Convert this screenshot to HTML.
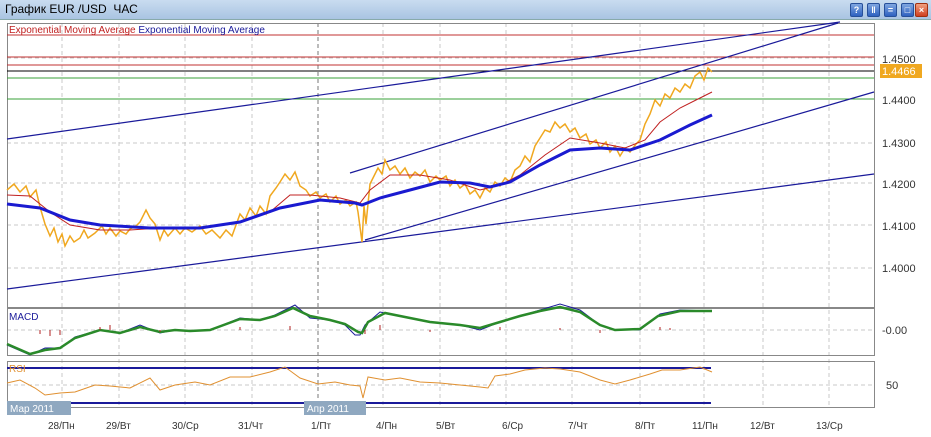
<!DOCTYPE html>
<html><head><meta charset="utf-8"><style>
body{margin:0;width:931px;height:437px;overflow:hidden;background:#fff;font-family:"Liberation Sans",sans-serif}
.tb{position:absolute;left:0;top:0;width:931px;height:19px;background:linear-gradient(#c9dcf0,#a9c4e2);border-bottom:1px solid #8aa;}
.tb span{position:absolute;left:5px;top:2px;font-size:12px;color:#000}
.btn{position:absolute;top:3px;width:11px;height:12px;border-radius:2px;background:linear-gradient(#7fa6e0,#2f62c0);border:1px solid #27509a;color:#fff;font-size:9px;font-weight:bold;text-align:center;line-height:12px}
svg{position:absolute;left:0;top:0}
</style></head><body>
<div class="tb"><span>График EUR /USD &nbsp;ЧАС</span>
<div class="btn" style="left:850px">?</div><div class="btn" style="left:867px">‖</div><div class="btn" style="left:884px">=</div><div class="btn" style="left:901px">□</div><div class="btn" style="left:915px;background:linear-gradient(#f0a080,#d04020);border-color:#a03010">×</div>
</div>
<svg width="931" height="437" font-family="Liberation Sans, sans-serif">
<g stroke="#c8c8c8" stroke-dasharray="4,3" stroke-width="1">
<line x1="62" y1="23" x2="62" y2="407"/><line x1="119" y1="23" x2="119" y2="407"/><line x1="185" y1="23" x2="185" y2="407"/><line x1="252" y1="23" x2="252" y2="407"/><line x1="383" y1="23" x2="383" y2="407"/><line x1="440" y1="23" x2="440" y2="407"/><line x1="506" y1="23" x2="506" y2="407"/><line x1="572" y1="23" x2="572" y2="407"/><line x1="640" y1="23" x2="640" y2="407"/><line x1="704" y1="23" x2="704" y2="407"/><line x1="763" y1="23" x2="763" y2="407"/><line x1="829" y1="23" x2="829" y2="407"/>
<line x1="7" y1="99" x2="874" y2="99"/><line x1="7" y1="143" x2="874" y2="143"/><line x1="7" y1="183" x2="874" y2="183"/><line x1="7" y1="225" x2="874" y2="225"/><line x1="7" y1="268" x2="874" y2="268"/><line x1="7" y1="58" x2="874" y2="58"/>
<line x1="7" y1="330" x2="874" y2="330"/><line x1="7" y1="385" x2="874" y2="385"/>
</g>
<line x1="318" y1="23" x2="318" y2="407" stroke="#777" stroke-dasharray="4,3"/>
<rect x="7.5" y="23.5" width="867" height="284" fill="none" stroke="#888"/>
<rect x="7.5" y="308.5" width="867" height="47" fill="none" stroke="#888"/>
<rect x="7.5" y="361.5" width="867" height="46" fill="none" stroke="#888"/>
<g stroke="#c03030" stroke-width="1"><line x1="7" y1="35" x2="874" y2="35"/><line x1="7" y1="57" x2="874" y2="57"/><line x1="7" y1="65" x2="874" y2="65"/></g>
<line x1="7" y1="71" x2="874" y2="71" stroke="#000"/>
<g stroke="#3aa03a"><line x1="7" y1="78" x2="874" y2="78"/><line x1="7" y1="99" x2="874" y2="99"/></g>
<g stroke="#1a1a9a" stroke-width="1.2" fill="none">
<line x1="7" y1="139" x2="840" y2="22"/><line x1="7" y1="289" x2="874" y2="174"/><line x1="365" y1="240" x2="874" y2="92"/><line x1="350" y1="173" x2="838" y2="23"/>
</g>
<polyline fill="none" stroke="#f0a820" stroke-width="1.5" points="7,190 14,184 20,192 26,186 30,197 36,190 40,207 45,224 50,236 54,228 58,242 62,234 65,246 70,236 74,242 80,238 84,230 88,238 95,233 102,226 106,234 110,228 116,236 120,231 126,234 130,229 136,226 140,222 146,210 150,218 155,224 160,240 164,230 168,236 175,228 180,234 185,228 192,232 200,226 206,234 212,230 220,238 226,230 232,236 240,214 245,220 250,208 256,216 260,206 266,214 270,196 276,188 280,182 285,174 290,180 295,172 300,186 306,190 310,196 316,192 320,198 326,194 330,202 336,196 340,204 346,200 350,206 356,202 358,212 362,242 364,206 366,224 370,184 374,176 378,168 382,174 385,160 390,170 395,166 400,174 405,168 410,178 415,172 420,176 425,170 430,182 436,176 440,180 446,176 450,186 455,180 460,188 465,184 470,194 475,190 480,198 485,188 490,192 495,182 500,186 505,178 510,182 515,170 520,166 525,156 530,162 535,146 540,138 545,130 550,132 555,122 560,128 565,124 570,132 575,128 580,138 586,134 590,144 596,140 600,148 606,142 610,152 615,146 620,156 625,148 630,152 636,144 640,140 645,124 650,114 655,100 660,106 665,94 670,98 675,88 680,92 685,84 690,88 695,76 700,72 704,80 708,68 712,72"/>
<polyline fill="none" stroke="#c02020" stroke-width="1" points="7,195 30,196 50,212 70,225 100,230 130,230 160,228 200,228 240,222 270,212 290,195 310,195 340,198 360,203 370,190 390,175 420,175 450,180 480,190 500,185 520,175 545,155 570,138 600,143 625,148 645,140 660,122 680,108 700,98 712,92"/>
<polyline fill="none" stroke="#1a1ad0" stroke-width="3" points="7,204 40,208 70,220 100,225 150,228 200,228 240,222 280,208 320,200 355,203 362,205 380,198 410,190 440,182 470,183 490,187 510,182 540,165 570,150 600,148 630,150 660,140 690,125 712,115"/>
<polyline fill="none" stroke="#1a1a9a" stroke-width="1" points="7,345 30,355 45,348 60,348 75,337 100,330 120,333 140,325 160,333 175,330 190,331 210,330 240,318 260,320 275,315 295,305 310,318 330,320 345,325 355,335 360,335 365,325 380,312 410,318 430,322 460,325 480,330 500,322 520,316 540,310 560,304 580,310 600,325 615,330 640,330 660,314 680,310 712,311"/>
<polyline fill="none" stroke="#2a8a2a" stroke-width="2.5" points="7,344 30,354 45,350 60,348 75,338 100,330 120,333 140,327 160,332 175,330 190,331 210,330 240,319 260,320 275,316 293,308 310,316 330,320 345,324 358,332 362,333 368,322 385,313 410,318 430,322 460,325 480,328 500,322 520,316 540,311 560,307 580,312 600,325 615,330 640,329 658,316 680,311 712,311"/>
<g stroke="#b02020" stroke-width="1"><path d="M40 330v4M50 330v6M60 330v5M100 330v-3M110 330v-5M160 330v2M240 330v-3M290 330v-4M365 330v4M380 330v-5M430 330v2M500 330v-3M560 330v-2M600 330v3M660 330v-3M670 330v-2"/></g>
<g stroke="#1a1a9a" stroke-width="2"><line x1="7" y1="368" x2="711" y2="368"/><line x1="7" y1="403" x2="711" y2="403"/></g>
<polyline fill="none" stroke="#e09030" stroke-width="1" points="7,383 20,380 35,388 45,395 60,393 75,392 95,385 110,386 130,388 150,378 160,390 175,385 195,382 210,385 230,377 250,377 270,372 285,367 300,378 318,384 335,382 350,385 360,386 363,398 368,377 385,380 400,378 420,382 440,383 460,385 480,387 488,388 495,376 510,374 525,370 545,368 560,369 580,372 600,380 615,384 630,380 650,374 662,370 680,370 700,367 712,372"/>
<text x="9" y="33" font-size="10" fill="#c02020">Exponential Moving Average <tspan fill="#1a1a9a">Exponential Moving Average</tspan></text>
<text x="9" y="320" font-size="10" fill="#1a1a9a">MACD</text>
<text x="9" y="372" font-size="10" fill="#e09030">RSI</text>
<g font-size="11" fill="#333"><text x="882" y="63">1.4500</text><text x="882" y="104">1.4400</text><text x="882" y="147">1.4300</text><text x="882" y="188">1.4200</text><text x="882" y="230">1.4100</text><text x="882" y="272">1.4000</text><text x="882" y="334">-0.00</text><text x="886" y="389">50</text></g>
<rect x="880" y="64" width="42" height="14" fill="#f0a820"/><text x="882" y="75" font-size="11" fill="#fff">1.4466</text>
<rect x="7" y="401" width="64" height="14" fill="#8fa8c0"/><text x="10" y="412" font-size="10" fill="#fff">Мар 2011</text>
<rect x="304" y="401" width="62" height="14" fill="#8fa8c0"/><text x="307" y="412" font-size="10" fill="#fff">Апр 2011</text>
<g font-size="10" fill="#333"><text x="48" y="429">28/Пн</text><text x="106" y="429">29/Вт</text><text x="172" y="429">30/Ср</text><text x="238" y="429">31/Чт</text><text x="311" y="429">1/Пт</text><text x="376" y="429">4/Пн</text><text x="436" y="429">5/Вт</text><text x="502" y="429">6/Ср</text><text x="568" y="429">7/Чт</text><text x="635" y="429">8/Пт</text><text x="692" y="429">11/Пн</text><text x="750" y="429">12/Вт</text><text x="816" y="429">13/Ср</text></g>
</svg>
</body></html>
